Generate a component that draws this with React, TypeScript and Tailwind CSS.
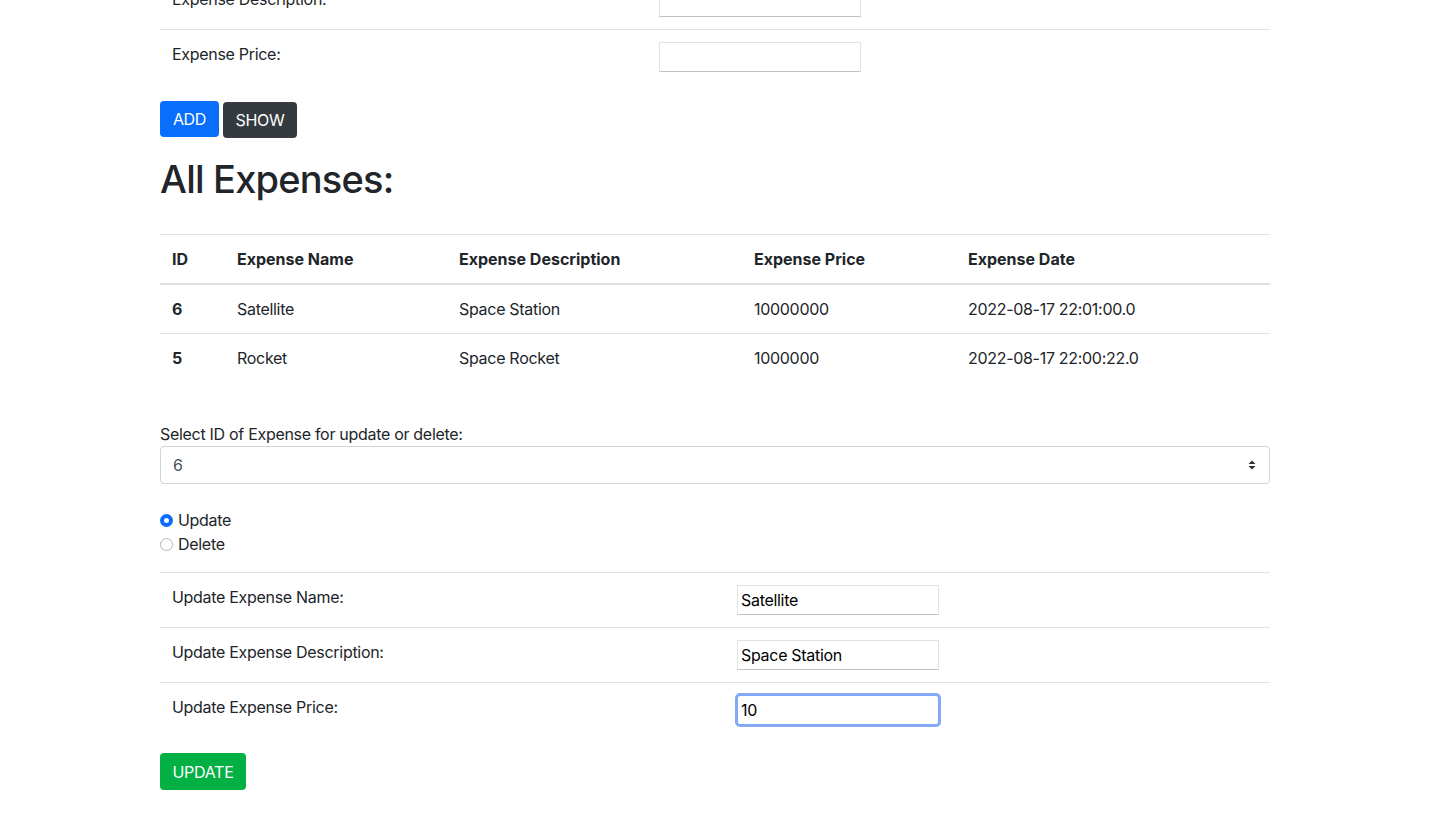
import { useState } from "react";

type Expense = {
  id: number;
  name: string;
  description: string;
  price: string;
  date: string;
};

const expenses: Expense[] = [
  { id: 6, name: "Satellite", description: "Space Station", price: "10000000", date: "2022-08-17 22:01:00.0" },
  { id: 5, name: "Rocket", description: "Space Rocket", price: "1000000", date: "2022-08-17 22:00:22.0" },
];

const cols = "grid grid-cols-[65px_222px_295px_214px_314px]";

const inputCls =
  "h-[30px] w-[202px] border border-[#e3e3e3] border-b-[#c2c2c2] bg-white px-[3px] text-[16px] text-black outline-none";

const FormRow = ({
  label,
  labelWidth,
  value,
  focused,
}: {
  label: string;
  labelWidth: string;
  value?: string;
  focused?: boolean;
}) => (
  <div className="flex border-t border-[#dee2e6] py-3">
    <div className={`${labelWidth} px-3 leading-6`}>{label}</div>
    <div className="px-3">
      <input
        defaultValue={value}
        className={
          focused
            ? "h-[30px] w-[202px] rounded-[3px] border border-[#7fa5f6] bg-white px-[3px] text-[16px] text-black outline-none ring-2 ring-[#86a9f7]"
            : inputCls
        }
      />
    </div>
  </div>
);

const Radio = ({ checked, label }: { checked?: boolean; label: string }) => (
  <label className="flex h-6 items-center">
    {checked ? (
      <span className="flex h-[13px] w-[13px] items-center justify-center rounded-full bg-[#0a6cff]">
        <span className="h-[5px] w-[5px] rounded-full bg-white" />
      </span>
    ) : (
      <span className="h-[13px] w-[13px] rounded-full border border-[#b5b5b5] bg-white" />
    )}
    <span className="ml-[5px]">{label}</span>
  </label>
);

const App = () => {
  const [selected, setSelected] = useState("6");

  return (
    <div className="min-h-[815px] overflow-hidden bg-white font-['Inter',sans-serif] text-[16px] tracking-[-0.3px] text-[#212529]">
      <div className="-mt-[26px] ml-[160px] w-[1110px]">
        {/* add form */}
        <div className="mb-[17px]">
          <FormRow label="Expense Description:" labelWidth="w-[487px]" />
          <FormRow label="Expense Price:" labelWidth="w-[487px]" />
        </div>

        <div className="flex gap-1">
          <button className="h-[36px] w-[59px] rounded bg-[#0a6efd] text-white">ADD</button>
          <button className="mt-px h-[36px] w-[74px] rounded bg-[#343a40] text-white">SHOW</button>
        </div>

        <h1 className="mt-[17px] text-[38px] font-medium leading-[48px] tracking-[-0.8px]">All Expenses:</h1>

        {/* expenses table */}
        <div className="mt-[31px]">
          <div className={`${cols} border-t border-b-2 border-[#dee2e6] font-bold tracking-normal`}>
            <div className="p-3 leading-6">ID</div>
            <div className="p-3 leading-6">Expense Name</div>
            <div className="p-3 leading-6">Expense Description</div>
            <div className="p-3 leading-6">Expense Price</div>
            <div className="p-3 leading-6">Expense Date</div>
          </div>
          {expenses.map((e, i) => (
            <div key={e.id} className={`${cols} ${i > 0 ? "border-t border-[#dee2e6]" : ""}`}>
              <div className="p-3 font-bold leading-6 tracking-normal">{e.id}</div>
              <div className="p-3 leading-6">{e.name}</div>
              <div className="p-3 leading-6">{e.description}</div>
              <div className="p-3 leading-6">{e.price}</div>
              <div className="p-3 leading-6">{e.date}</div>
            </div>
          ))}
        </div>

        <div className="mt-[40px] leading-6">Select ID of Expense for update or delete:</div>
        <div className="relative">
          <select
            value={selected}
            onChange={(ev) => setSelected(ev.target.value)}
            className="h-[38px] w-full appearance-none rounded border border-[#ced4da] bg-white px-3 text-[16px] text-[#495057] outline-none"
          >
            {expenses.map((e) => (
              <option key={e.id} value={String(e.id)}>
                {e.id}
              </option>
            ))}
          </select>
          <svg
            className="pointer-events-none absolute right-[14px] top-[14px]"
            width="8"
            height="10"
            viewBox="0 0 8 10"
          >
            <path d="M4 0.5L7.5 4H0.5Z M4 9.5L7.5 6H0.5Z" fill="#333" />
          </svg>
        </div>

        <div className="mt-6">
          <Radio checked label="Update" />
          <Radio label="Delete" />
        </div>

        {/* update form */}
        <div className="mt-4 mb-4">
          <FormRow label="Update Expense Name:" labelWidth="w-[565px]" value="Satellite" />
          <FormRow label="Update Expense Description:" labelWidth="w-[565px]" value="Space Station" />
          <FormRow label="Update Expense Price:" labelWidth="w-[565px]" value="10" focused />
        </div>

        <button className="h-[37px] w-[86px] rounded bg-[#03b043] text-white">UPDATE</button>
      </div>
    </div>
  );
};

export default App;
